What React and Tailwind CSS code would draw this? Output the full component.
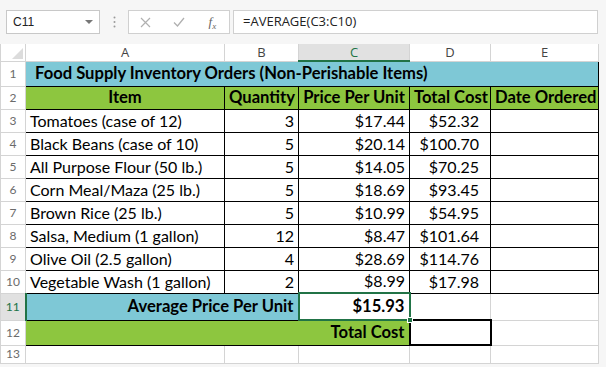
import React from 'react';

const rows = [
  ['Tomatoes (case of 12)', '3', '$17.44', '$52.32'],
  ['Black Beans (case of 10)', '5', '$20.14', '$100.70'],
  ['All Purpose Flour (50 lb.)', '5', '$14.05', '$70.25'],
  ['Corn Meal/Maza (25 lb.)', '5', '$18.69', '$93.45'],
  ['Brown Rice (25 lb.)', '5', '$10.99', '$54.95'],
  ['Salsa, Medium (1 gallon)', '12', '$8.47', '$101.64'],
  ['Olive Oil (2.5 gallon)', '4', '$28.69', '$114.76'],
  ['Vegetable Wash (1 gallon)', '2', '$8.99', '$17.98'],
];

const rowHead = 'border border-[#d4d4d4] bg-white text-center align-middle text-[12px] text-[#6b6b6b] p-0';
const cell = 'border border-black px-[4px] p-0 whitespace-nowrap overflow-hidden';

function Toolbar() {
  return (
    <div className="h-[44px] flex items-center bg-[#f6f6f6] pl-[6px] pr-[8px] gap-0">
      <div className="w-[94px] h-[24px] bg-white border border-[#c8c8c8] flex items-center justify-between pl-[6px] pr-[6px]">
        <span className="text-[12px] text-[#222]" style={{ fontFamily: '"Liberation Sans", sans-serif' }}>C11</span>
        <svg width="8" height="5" viewBox="0 0 8 5"><path d="M0 0h8L4 4z" fill="#777" /></svg>
      </div>
      <div className="w-[28px] flex justify-center">
        <svg width="3" height="12" viewBox="0 0 3 12">
          <circle cx="1.5" cy="1.5" r="1" fill="#999" />
          <circle cx="1.5" cy="6" r="1" fill="#999" />
          <circle cx="1.5" cy="10.5" r="1" fill="#999" />
        </svg>
      </div>
      <div className="w-[102px] h-[24px] bg-white border border-[#d0d0d0] flex items-center">
        <div className="w-[34px] flex justify-center">
          <svg width="11" height="11" viewBox="0 0 11 11"><path d="M1 1l9 9M10 1l-9 9" stroke="#b0b0b0" strokeWidth="1.2" /></svg>
        </div>
        <div className="w-[34px] flex justify-center">
          <svg width="12" height="10" viewBox="0 0 12 10"><path d="M1 5.5l3.5 3.5L11 1" stroke="#b0b0b0" strokeWidth="1.3" fill="none" /></svg>
        </div>
        <div className="w-[34px] flex justify-center">
          <span className="text-[13px] italic text-[#666]" style={{ fontFamily: '"Liberation Serif", serif' }}>f<sub className="text-[9px]">x</sub></span>
        </div>
      </div>
      <div className="ml-[3px] flex-1 h-[24px] bg-white border border-[#d0d0d0] flex items-center pl-[9px]">
        <span className="text-[13px] text-[#222]" style={{ fontFamily: '"Open Sans", sans-serif' }}>=AVERAGE(C3:C10)</span>
      </div>
    </div>
  );
}

export default function App() {
  return (
    <div className="w-[606px] h-[367px] bg-[#f6f6f6] overflow-hidden" style={{ fontFamily: 'Lato, "Liberation Sans", sans-serif' }}>
      <Toolbar />
      <div className="w-[598px] bg-white">
        <table className="table-fixed border-collapse w-[598px] text-[16px] text-black leading-none">
          <colgroup>
            <col className="w-[25px]" />
            <col className="w-[199px]" />
            <col className="w-[74px]" />
            <col className="w-[111px]" />
            <col className="w-[81px]" />
            <col className="w-[108px]" />
          </colgroup>
          <tbody>
            <tr className="h-[17px]">
              <td className="border border-[#d4d4d4] border-t-0 bg-white p-0 relative">
                <svg className="absolute right-[2px] bottom-[2px]" width="11" height="11" viewBox="0 0 11 11"><path d="M11 0v11H0z" fill="#dcdcdc" /></svg>
              </td>
              {['A', 'B', 'C', 'D', 'E'].map((c) => (
                <td
                  key={c}
                  className={
                    c === 'C'
                      ? 'border border-[#d4d4d4] border-t-0 border-b-2 border-b-[#217346] bg-[#e1e1e1] text-center text-[13px] text-[#217346] p-0'
                      : 'border border-[#d4d4d4] border-t-0 bg-white text-center text-[13px] text-[#444] p-0'
                  }
                  style={{ fontFamily: '"Open Sans", sans-serif' }}
                >
                  {c}
                </td>
              ))}
            </tr>
            <tr className="h-[25px]">
              <td className={rowHead}>1</td>
              <td colSpan={5} className={`${cell} bg-[#7ec8d6] font-bold text-[16.6px] pl-[9px]`}>
                Food Supply Inventory Orders (Non-Perishable Items)
              </td>
            </tr>
            <tr className="h-[23px]">
              <td className={rowHead}>2</td>
              {['Item', 'Quantity', 'Price Per Unit', 'Total Cost', 'Date Ordered'].map((h) => (
                <td key={h} className={`${cell} bg-[#8dc63f] font-bold text-[16.6px] text-center`}>{h}</td>
              ))}
            </tr>
            {rows.map((r, i) => (
              <tr key={r[0]} className="h-[23px]">
                <td className={rowHead}>{i + 3}</td>
                <td className={`${cell} text-left`}>{r[0]}</td>
                <td className={`${cell} text-right`}>{r[1]}</td>
                <td className={`${cell} text-right`}>{r[2]}</td>
                <td className={`${cell} text-right pr-[11px]`}>{r[3]}</td>
                <td className={cell}></td>
              </tr>
            ))}
            <tr className="h-[27px]">
              <td className="border border-[#d4d4d4] border-r-2 border-r-[#217346] bg-[#e1e1e1] text-center text-[12px] text-[#217346] p-0">11</td>
              <td colSpan={2} className={`${cell} bg-[#7ec8d6] font-bold text-[16.6px] text-right`}>Average Price Per Unit</td>
              <td className="border-2 border-[#217346] px-[4px] p-0 text-right font-bold text-[16.6px] relative">
                $15.93
                <span className="absolute right-[-4px] bottom-[-4px] w-[6px] h-[6px] bg-[#217346] border border-white" />
              </td>
              <td className="border border-[#d4d4d4] border-t-black p-0"></td>
              <td className="border border-[#d4d4d4] border-t-black p-0"></td>
            </tr>
            <tr className="h-[25px]">
              <td className={rowHead}>12</td>
              <td colSpan={3} className={`${cell} bg-[#8dc63f] font-bold text-[16.6px] text-right`}>Total Cost</td>
              <td className="border-2 border-black p-0"></td>
              <td className="border border-[#d4d4d4] p-0"></td>
            </tr>
            <tr className="h-[18px]">
              <td className={rowHead}>13</td>
              <td className="border border-[#d4d4d4] border-t-black p-0"></td>
              <td className="border border-[#d4d4d4] border-t-black p-0"></td>
              <td className="border border-[#d4d4d4] border-t-black p-0"></td>
              <td className="border border-[#d4d4d4] p-0"></td>
              <td className="border border-[#d4d4d4] p-0"></td>
            </tr>
          </tbody>
        </table>
      </div>
    </div>
  );
}
